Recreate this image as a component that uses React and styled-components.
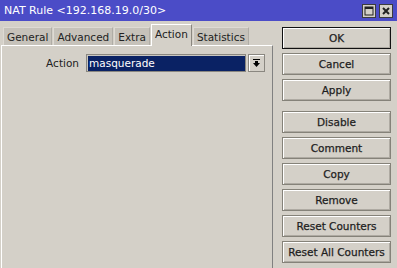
import React, { useState } from 'react';
import styled, { createGlobalStyle } from 'styled-components';

const GlobalStyle = createGlobalStyle`
  html, body {
    margin: 0;
    padding: 0;
    background: #d4d0c8;
  }
  * { box-sizing: border-box; }
`;

const Window = styled.div`
  width: 397px;
  height: 268px;
  overflow: hidden;
  background: #d4d0c8;
  font-family: "DejaVu Sans", sans-serif;
  font-size: 10.5px;
  color: #222;
  display: flex;
  flex-direction: column;
`;

const TitleBar = styled.div`
  height: 21px;
  flex-shrink: 0;
  background: #4b4cc7;
  color: #fff;
  display: flex;
  align-items: center;
  padding: 0 4px 0 4px;
`;

const Title = styled.div`
  flex: 1;
  font-size: 11px;
  line-height: 21px;
  white-space: nowrap;
`;

const TitleButtons = styled.div`
  display: flex;
  gap: 3px;
  margin-top: 1px;
`;

const TitleButton = styled.div`
  width: 14px;
  height: 14px;
  background: #d4d0c8;
  border: 1px solid #3c3c3c;
  display: flex;
  align-items: center;
  justify-content: center;
`;

const Body = styled.div`
  flex: 1;
  display: flex;
  min-height: 0;
`;

const LeftSide = styled.div`
  width: 273px;
  display: flex;
  flex-direction: column;
  padding-left: 1px;
`;

const TabBar = styled.div`
  height: 24px;
  display: flex;
  align-items: flex-end;
  padding-left: 2px;
  gap: 1px;
  position: relative;
  z-index: 1;
`;

const Tab = styled.div`
  height: ${(p) => (p.active ? '22px' : '18px')};
  padding: 0 ${(p) => (p.active ? '3px' : '3px')};
  display: flex;
  align-items: center;
  padding-bottom: ${(p) => (p.active ? '3px' : '0')};
  background: ${(p) => (p.active ? '#d4d0c8' : '#c6c2ba')};
  border-top: 1px solid ${(p) => (p.active ? '#fff' : '#dedad3')};
  border-left: 1px solid ${(p) => (p.active ? '#fff' : '#dedad3')};
  border-right: 1px solid ${(p) => (p.active ? '#8a8780' : '#b0ada6')};
  margin-bottom: ${(p) => (p.active ? '-1px' : '0')};
  font-size: 10.5px;
  color: #222;
  white-space: nowrap;
`;

const Panel = styled.div`
  flex: 1;
  border-top: 1px solid #fff;
  border-left: 1px solid #fff;
  border-right: 1px solid #808080;
  padding: 8px 0 0 0;
`;

const FieldRow = styled.div`
  display: flex;
  align-items: center;
  height: 18px;
`;

const FieldLabel = styled.div`
  width: 77px;
  text-align: right;
  font-size: 10.5px;
  margin-right: 7px;
`;

const Input = styled.div`
  width: 160px;
  height: 18px;
  background: #0a2264;
  border: 1px solid #8a8780;
  box-shadow: inset 1px 1px 0 #c9c6c0;
  color: #fff;
  font-size: 10.5px;
  line-height: 16px;
  padding-left: 2px;
`;

const DropButton = styled.div`
  width: 17px;
  height: 18px;
  margin-left: 2px;
  border: 1px solid #8a8780;
  box-shadow: inset 1px 1px 0 #fff;
  display: flex;
  align-items: center;
  justify-content: center;
`;

const RightSide = styled.div`
  flex: 1;
  display: flex;
  flex-direction: column;
  padding: 6px 6px 0 9px;
`;

const Button = styled.div`
  height: 22px;
  margin-bottom: ${(p) => (p.spaced ? '10px' : '4px')};
  border: 1px solid ${(p) => (p.primary ? '#111' : '#858279')};
  box-shadow: inset 1px 1px 0 #fff, inset -1px -1px 0 #aeaaa2;
  background: #d4d0c8;
  display: flex;
  align-items: center;
  justify-content: center;
  color: #1e1e1e;
  font-size: 10.5px;
  -webkit-text-stroke: 0.25px #1e1e1e;
  white-space: nowrap;
`;

const tabs = ['General', 'Advanced', 'Extra', 'Action', 'Statistics'];

const buttons = [
  { label: 'OK', primary: true },
  { label: 'Cancel' },
  { label: 'Apply', spaced: true },
  { label: 'Disable' },
  { label: 'Comment' },
  { label: 'Copy' },
  { label: 'Remove' },
  { label: 'Reset Counters' },
  { label: 'Reset All Counters' },
];

const App = () => {
  const [activeTab, setActiveTab] = useState('Action');

  return (
    <Window>
      <GlobalStyle />
      <TitleBar>
        <Title>NAT Rule &lt;192.168.19.0/30&gt;</Title>
        <TitleButtons>
          <TitleButton>
            <svg width="10" height="10" viewBox="0 0 10 10">
              <rect x="1" y="1" width="8" height="8" fill="none" stroke="#222" strokeWidth="1" />
              <rect x="1" y="1" width="8" height="2" fill="#222" />
            </svg>
          </TitleButton>
          <TitleButton>
            <svg width="10" height="10" viewBox="0 0 10 10">
              <path d="M2 2 L8 8 M8 2 L2 8" stroke="#222" strokeWidth="2" />
            </svg>
          </TitleButton>
        </TitleButtons>
      </TitleBar>
      <Body>
        <LeftSide>
          <TabBar>
            {tabs.map((t) => (
              <Tab key={t} active={t === activeTab} onClick={() => setActiveTab(t)}>
                {t}
              </Tab>
            ))}
          </TabBar>
          <Panel>
            <FieldRow>
              <FieldLabel>Action</FieldLabel>
              <Input>masquerade</Input>
              <DropButton>
                <svg width="7" height="8" viewBox="0 0 7 8">
                  <rect x="0" y="0" width="7" height="1" fill="#000" />
                  <rect x="2" y="2" width="3" height="2" fill="#000" />
                  <polygon points="0,4 7,4 3.5,8" fill="#000" />
                </svg>
              </DropButton>
            </FieldRow>
          </Panel>
        </LeftSide>
        <RightSide>
          {buttons.map((b) => (
            <Button key={b.label} primary={b.primary} spaced={b.spaced}>
              {b.label}
            </Button>
          ))}
        </RightSide>
      </Body>
    </Window>
  );
};

export default App;
